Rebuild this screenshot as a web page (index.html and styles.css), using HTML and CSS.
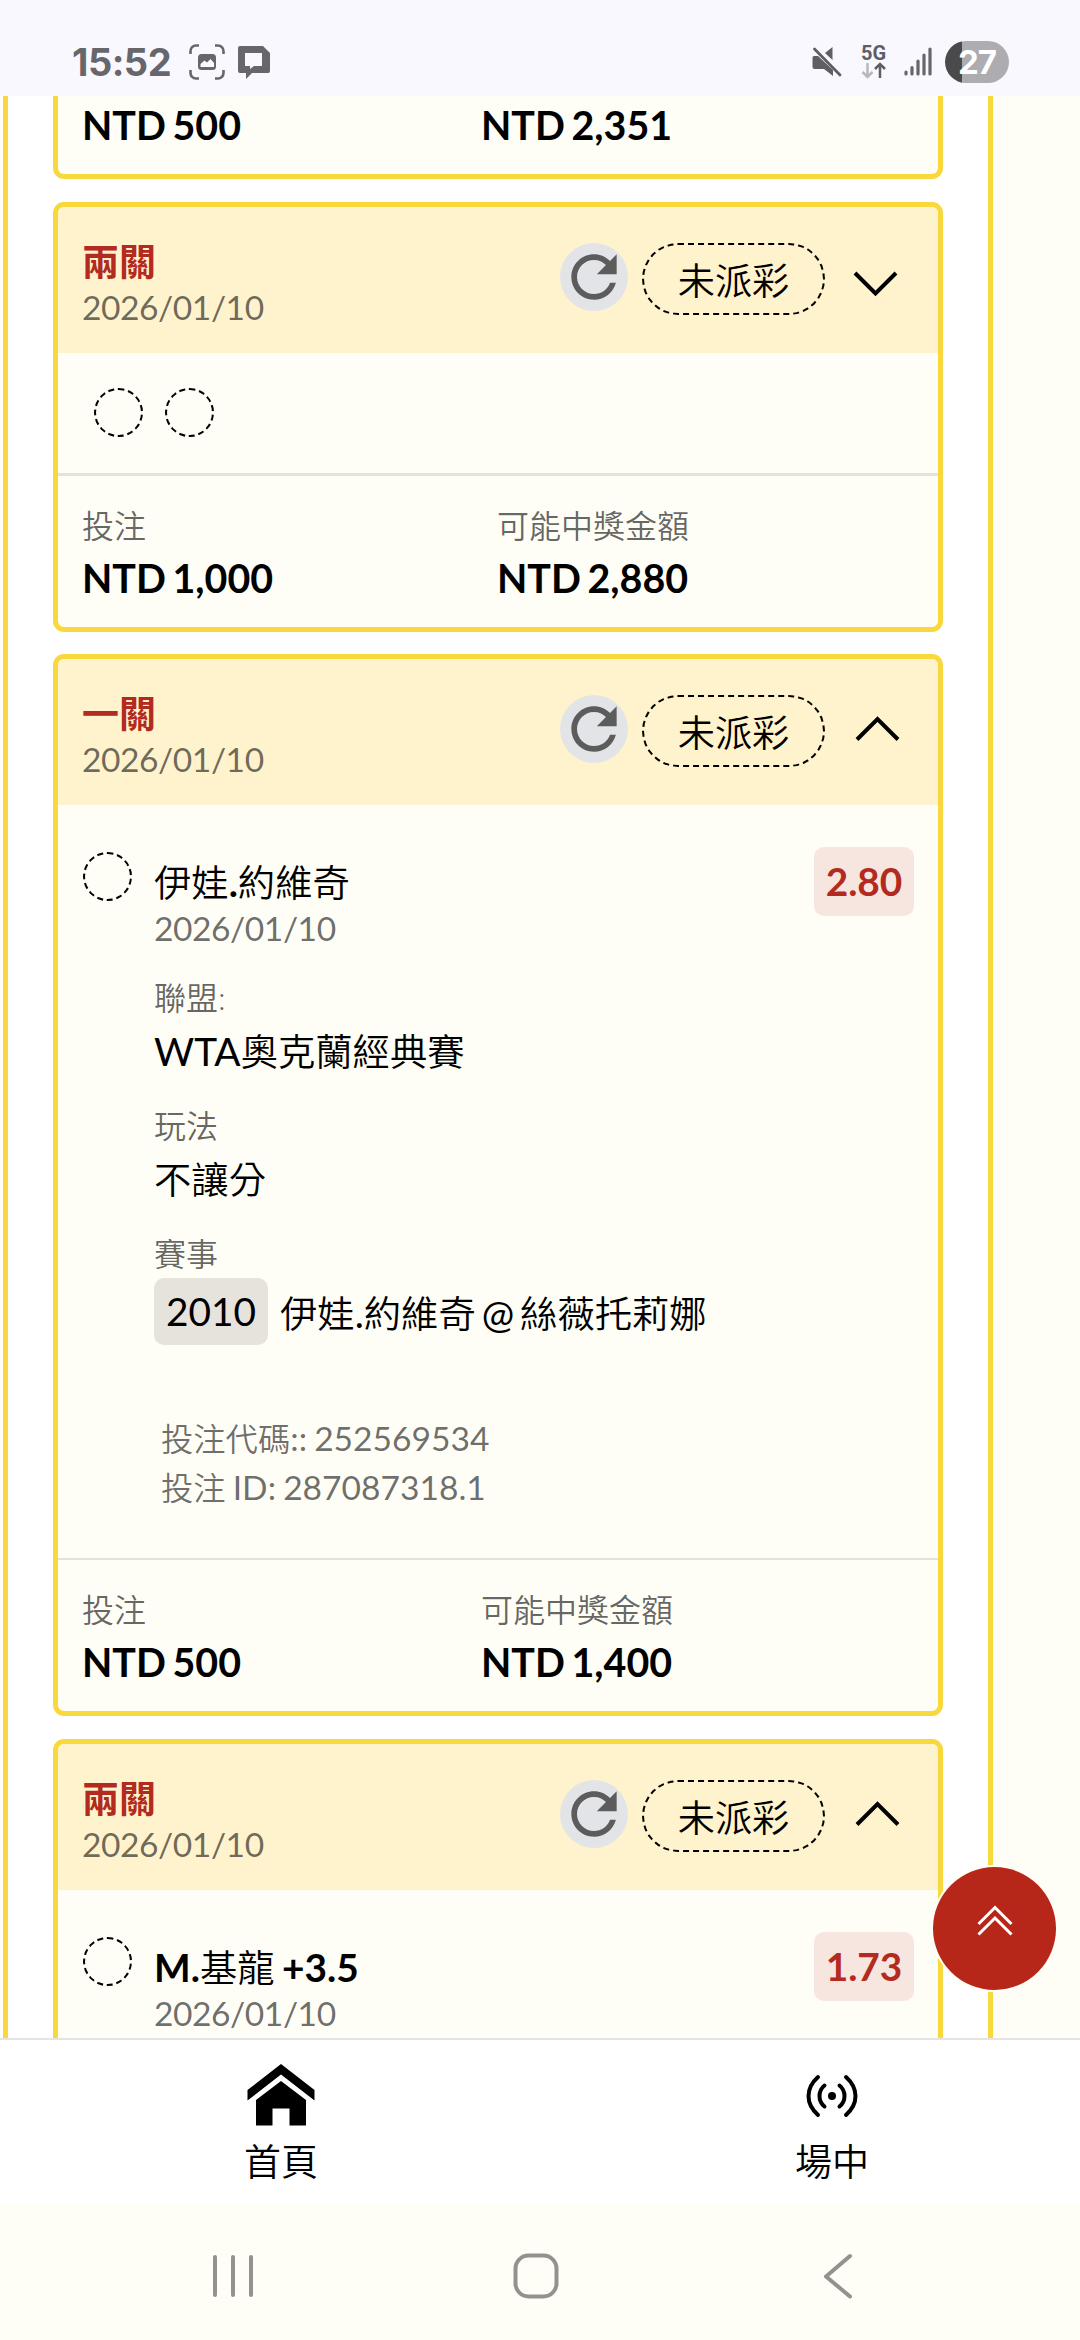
FILE: index.html
```
<!DOCTYPE html>
<html lang="zh-Hant">
<head>
  <meta charset="UTF-8" />
  <meta name="viewport" content="width=device-width, initial-scale=1" />
  <title>投注紀錄</title>
  <link rel="stylesheet" href="styles.css">
</head>
<body>
  <!-- shared icons -->
  <svg width="0" height="0" class="sprite">
    <symbol id="refresh" viewBox="0 0 24 24">
      <path d="M17.65 6.35C16.2 4.9 14.21 4 12 4c-4.42 0-7.99 3.58-7.99 8s3.57 8 7.99 8c3.73 0 6.84-2.55 7.73-6h-2.08c-.82 2.33-3.04 4-5.65 4-3.31 0-6-2.69-6-6s2.69-6 6-6c1.66 0 3.14.69 4.22 1.78L13 11h7V4l-2.35 2.35z"/>
    </symbol>
    <symbol id="up" viewBox="0 0 75 72"><path d="M18 44.500L38.500 24L59 44.500"/></symbol>
    <symbol id="down" viewBox="0 0 75 72"><path d="M16 30L36.500 50.500L57 30"/></symbol>
  </svg>

  <header class="status-bar">
    <div class="status-left">
      <span class="time">15:52</span>
      <svg class="capture" width="36" height="36" viewBox="0 0 36 36">
        <path d="M1.500 10V7a5.500 5.500 0 0 1 5.500-5.500h3M26 1.500h3A5.500 5.500 0 0 1 34.500 7v3M34.500 26v3a5.500 5.500 0 0 1-5.500 5.500h-3M10 34.500H7A5.500 5.500 0 0 1 1.500 29v-3" fill="none" stroke="#67666b" stroke-width="2.600"/>
        <rect x="9" y="10" width="18" height="16" rx="3.500" fill="#67666b"/>
        <path d="M11.500 23v-3l4-3.500 2.500 2 3.500-3.500 3.500 4v4z" fill="#f9f8fe"/>
      </svg>
      <svg width="34" height="34" viewBox="0 0 34 34">
        <path fill-rule="evenodd" fill="#67666b" d="M3 1h23l7 7v18a2 2 0 0 1-2 2H15l-6 6v-6H3a2 2 0 0 1-2-2V3a2 2 0 0 1 2-2zM8 8v13h5v3l4-3h8V8z"/>
      </svg>
    </div>
    <div class="status-right">
      <svg width="32" height="32" viewBox="0 0 32 32">
        <path d="M1.500 11.500q0-1.500 1.500-1.500h4l15 14v6l-9-7H3.500q-2 0-2-2zM21.500 1v13L14 7z" fill="#5f5e62"/>
        <path d="M3.500 3L29 29" stroke="#5f5e62" stroke-width="2.800" stroke-linecap="round"/>
      </svg>
      <div class="network">
        <span>5G</span>
        <svg width="26" height="17" viewBox="0 0 26 17" fill="none" stroke-width="2.500">
          <path d="M6.500 1v14M1.500 10l5 5 5-5" stroke="#b9b8bd"/>
          <path d="M19 16V2M14 7l5-5 5 5" stroke="#5f5e62"/>
        </svg>
      </div>
      <svg width="28" height="30" viewBox="0 0 28 30" stroke="#67666b" stroke-width="3.200" stroke-linecap="round">
        <path d="M2 25v2M8 20.500v6.500M14 14v13M20 8v19M26 2v25"/>
      </svg>
      <div class="battery">27</div>
    </div>
  </header>

  <main>
    <div class="list">
      <section class="card card-cut">
        <div class="totals">
          <div class="amount">NTD 500</div>
          <div class="amount">NTD 2,351</div>
        </div>
      </section>

      <section class="card">
        <div class="card-head">
          <div class="card-title">
            <h2>兩關</h2>
            <p class="date">2026/01/10</p>
          </div>
          <div class="actions">
            <span class="refresh"><svg><use href="#refresh"/></svg></span>
            <span class="pill">未派彩</span>
            <svg class="chevron"><use href="#down"/></svg>
          </div>
        </div>
        <div class="legs">
          <span class="dot"></span>
          <span class="dot"></span>
        </div>
        <div class="totals totals-wide">
          <div>
            <div class="label">投注</div>
            <div class="amount">NTD 1,000</div>
          </div>
          <div>
            <div class="label">可能中獎金額</div>
            <div class="amount">NTD 2,880</div>
          </div>
        </div>
      </section>

      <section class="card">
        <div class="card-head">
          <div class="card-title">
            <h2>一關</h2>
            <p class="date">2026/01/10</p>
          </div>
          <div class="actions">
            <span class="refresh"><svg><use href="#refresh"/></svg></span>
            <span class="pill">未派彩</span>
            <svg class="chevron"><use href="#up"/></svg>
          </div>
        </div>
        <div class="bet">
          <span class="dot"></span>
          <div class="bet-info">
            <h3>
              <span class="zh">伊娃</span>.<span class="zh">約維奇</span>
            </h3>
            <p class="date">2026/01/10</p>
            <div class="field">
              <div class="label">聯盟:</div>
              <div class="value">WTA<span class="zh">奧克蘭經典賽</span></div>
            </div>
            <div class="field">
              <div class="label">玩法</div>
              <div class="value"><span class="zh">不讓分</span></div>
            </div>
            <div class="field">
              <div class="label">賽事</div>
              <div class="match">
                <span class="code">2010</span>
                <span class="teams"><span class="zh">伊娃</span>.<span class="zh">約維奇</span> @ <span class="zh">絲薇托莉娜</span></span>
              </div>
            </div>
            <div class="ids">
              <p><span class="zh">投注代碼</span>:: 252569534</p>
              <p><span class="zh">投注</span> ID: 287087318.1</p>
            </div>
          </div>
          <span class="odds">2.80</span>
        </div>
        <div class="totals">
          <div>
            <div class="label">投注</div>
            <div class="amount">NTD 500</div>
          </div>
          <div>
            <div class="label">可能中獎金額</div>
            <div class="amount">NTD 1,400</div>
          </div>
        </div>
      </section>

      <section class="card">
        <div class="card-head">
          <div class="card-title">
            <h2>兩關</h2>
            <p class="date">2026/01/10</p>
          </div>
          <div class="actions">
            <span class="refresh"><svg><use href="#refresh"/></svg></span>
            <span class="pill">未派彩</span>
            <svg class="chevron"><use href="#up"/></svg>
          </div>
        </div>
        <div class="bet">
          <span class="dot"></span>
          <div class="bet-info">
            <h3>M.<span class="zh">基龍</span> +3.5</h3>
            <p class="date">2026/01/10</p>
          </div>
          <span class="odds">1.73</span>
        </div>
      </section>
    </div>
  </main>

  <button class="to-top">
    <svg width="40" height="34" viewBox="0 0 40 34"><path d="M3.500 20L20 3.500L36.500 20M3.500 30.500L20 14L36.500 30.500"/></svg>
  </button>

  <nav class="tabs">
    <a class="tab tab-home">
      <svg width="68" height="62" viewBox="0 0 68 62">
        <path d="M34 0L67.500 26v10.500L34 10.500 .500 36.500V26z"/>
        <path d="M34 17L59 36v25.500H42.500V44.500h-17v17H9V36z"/>
      </svg>
      <span>首頁</span>
    </a>
    <a class="tab tab-live">
      <svg width="54" height="62" viewBox="0 0 54 62" fill="none" stroke="#000" stroke-width="4" stroke-linecap="round">
        <circle cx="27" cy="32" r="4" fill="#000" stroke="none"/>
        <path d="M13 13q-9.500 8.500-9.500 19t9.500 19M41 13q9.500 8.500 9.500 19t-9.500 19M19.500 21.500q-5 4-5 10.500t5 10.500M34.500 21.500q5 4 5 10.500t-5 10.500"/>
      </svg>
      <span>場中</span>
    </a>
  </nav>

  <footer class="system-nav">
    <svg width="46" height="48" viewBox="0 0 46 48"><path d="M5 5v38M23 5v38M41 5v38"/></svg>
    <svg width="50" height="50" viewBox="0 0 50 50"><rect x="4.500" y="4.500" width="41" height="41" rx="13"/></svg>
    <svg width="46" height="48" viewBox="0 0 46 48"><path d="M35 4L11 24.500L35 44.500"/></svg>
  </footer>
</body>
</html>
```
FILE: styles.css
```
* {
  box-sizing: border-box;
}

body {
  margin: 0;
  width: 1080px;
  height: 2340px;
  display: flex;
  flex-direction: column;
  overflow: hidden;
  position: relative;
  background: #fffef6;
  color: #000;
  font-family: Lato, "Noto Sans CJK TC", sans-serif;
  font-size: 38.8px;
}

h2, h3, p {
  margin: 0;
}

.sprite {
  position: absolute;
}

/* status bar */
.status-bar {
  height: 96px;
  flex: none;
  display: flex;
  justify-content: space-between;
  padding: 41px 71px 0 72px;
  background: #f9f8fe;
  color: #67666b;
  font-family: Inter, sans-serif;
}

.status-left, .status-right {
  display: flex;
  align-items: center;
  height: 42px;
}

.time {
  width: 105px;
  font-size: 38px;
  font-weight: 700;
  letter-spacing: -0.5px;
  line-height: 42px;
}

.capture {
  margin: 0 12px;
}

.network {
  width: 26px;
  height: 34px;
  margin: 0 17px 0 18px;
  font: 700 20px/17px Roboto, sans-serif;
  color: #5f5e62;
}

.network span, .network svg {
  display: block;
}

.battery {
  width: 64px;
  height: 42px;
  margin-left: 13px;
  border-radius: 21px;
  background: linear-gradient(to right, #4a494c 17px, #adacb0 17px);
  color: #fff;
  font-size: 33px;
  font-weight: 700;
  letter-spacing: -1px;
  line-height: 42px;
  text-align: center;
}

/* bet list */
main {
  flex: 1;
  min-height: 0;
  overflow: hidden;
}

.list {
  width: 990px;
  min-height: 100%;
  margin-left: 3px;
  padding: 0 45px;
  border: solid #f8d83c;
  border-width: 0 5px;
  background: #fff;
}

.card {
  margin-bottom: 22px;
  border: 5px solid #f8d83c;
  border-radius: 11px;
  background: #fffef6;
  overflow: hidden;
}

.card:last-child {
  margin-top: 23px;
}

.card-cut {
  border-top: none;
  border-radius: 0 0 11px 11px;
  margin-bottom: 23px;
}

.card-head {
  display: flex;
  justify-content: space-between;
  height: 146px;
  padding: 0 24px;
  background: #fff3cd;
}

.card-title {
  padding-top: 31px;
}

.card-title h2 {
  font-size: 37px;
  font-weight: 700;
  line-height: 48px;
  color: #b32a20;
}

.date {
  font-size: 33.6px;
  letter-spacing: -0.45px;
  line-height: 42px;
  color: rgba(0, 0, 0, 0.58);
}

.actions {
  display: flex;
  align-items: flex-start;
  padding-top: 36px;
}

.refresh {
  width: 68px;
  height: 68px;
  margin-right: 14px;
  border-radius: 50%;
  background: #e3e4e8;
}

.refresh svg {
  display: block;
  width: 68px;
  height: 68px;
  fill: #5c5c5c;
}

.pill {
  width: 183px;
  height: 72px;
  border: 2px dashed #000;
  border-radius: 36px;
  font-size: 37.2px;
  font-weight: 350;
  line-height: 71px;
  text-align: center;
}

.chevron {
  width: 75px;
  height: 72px;
  margin-left: 14px;
  fill: none;
  stroke: #000;
  stroke-width: 4;
}

.dot {
  flex: none;
  width: 49px;
  height: 49px;
  border: 2px dashed #000;
  border-radius: 50%;
}

.legs {
  display: flex;
  gap: 22px;
  height: 120px;
  padding: 35px 36px 0;
}

.totals {
  display: grid;
  grid-template-columns: 399px 1fr;
  height: 153px;
  padding: 26px 24px 0;
  border-top: 2px solid #e5e2dc;
}

.totals-wide {
  grid-template-columns: 415px 1fr;
  height: 154px;
  border-top-width: 3px;
}

.card-cut .totals {
  height: 78px;
  padding-top: 1px;
  border-top: none;
}

.label {
  font-size: 32px;
  font-weight: 350;
  line-height: 48px;
  color: rgba(0, 0, 0, 0.62);
}

.amount {
  margin-top: 1px;
  font-size: 39.4px;
  font-weight: 700;
  line-height: 54px;
  word-spacing: -3px;
}

/* expanded bet */
.bet {
  display: flex;
  align-items: flex-start;
  padding: 0 24px 46px;
}

.bet .dot {
  margin: 47px 22px 0 1px;
}

.bet-info {
  flex: 1;
  padding-top: 53px;
}

.bet-info h3 {
  font-size: 38.8px;
  font-weight: 700;
  line-height: 49px;
  word-spacing: -2px;
}

.zh {
  font-size: 0.962em;
  font-weight: 350;
  line-height: 1;
}

.field {
  margin-top: 26px;
}

.date + .field {
  margin-top: 25px;
}

.value {
  margin-top: 4px;
  line-height: 50px;
}

.match {
  display: flex;
  gap: 12px;
  height: 67px;
  line-height: 67px;
}

.code {
  width: 114px;
  border-radius: 10px;
  background: #e6e3dd;
  text-align: center;
}

.teams {
  padding-top: 2px;
  word-spacing: -4px;
}

.ids {
  margin: 69px 0 0 7px;
  font-size: 33.6px;
  line-height: 49px;
  word-spacing: -1.5px;
  color: rgba(0, 0, 0, 0.58);
}

.odds {
  width: 100px;
  margin-top: 42px;
  border-radius: 10px;
  background: #f7e6df;
  color: #b32a20;
  font-weight: 700;
  line-height: 69px;
  text-align: center;
}

/* back to top, floats over the list */
.to-top {
  position: absolute;
  left: 933px;
  top: 1867px;
  width: 123px;
  height: 123px;
  padding: 0 0 12px;
  border: none;
  border-radius: 50%;
  background: #b6271a;
  box-shadow: 0 0 0 2px #fffef6;
}

.to-top path {
  fill: none;
  stroke: #fff;
  stroke-width: 3;
}

/* bottom tabs */
.tabs {
  flex: none;
  display: flex;
  height: 166px;
  border-top: 2px solid #e5e3e3;
  background: #fff;
}

.tab {
  flex: none;
  display: flex;
  flex-direction: column;
  align-items: center;
  padding-top: 24px;
}

.tab-home {
  width: 562px;
}

.tab-live {
  width: 540px;
}

.tab span {
  margin-top: 9px;
  font-size: 37px;
  font-weight: 350;
  line-height: 54px;
}

.system-nav {
  flex: none;
  display: flex;
  justify-content: space-between;
  align-items: center;
  height: 136px;
  padding: 7px 219px 0 210px;
}

.system-nav svg {
  fill: none;
  stroke: #93928c;
  stroke-width: 4;
  stroke-linecap: round;
  stroke-linejoin: round;
}
```
